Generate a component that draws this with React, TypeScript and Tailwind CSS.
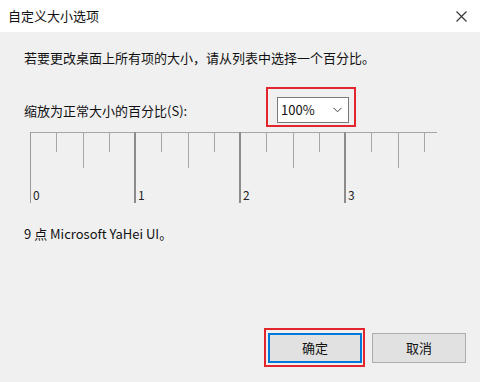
import React from "react";

const FONT = '"Noto Sans CJK SC", "Noto Sans", sans-serif';

function Ruler() {
  const minor: number[] = [];
  for (let i = 0; i < 16; i++) {
    if (i % 4 === 0) continue;
    minor.push(i);
  }
  const ox = 6; // x=30 in page coords with container at 24
  const step = 105 / 4;
  return (
    <svg width="432" height="80" className="block" style={{ fontFamily: FONT }}>
      <line x1={ox} y1={5.5} x2={413} y2={5.5} stroke="#a6a6a6" strokeWidth={1} />
      <line x1={ox + 0.5} y1={5} x2={ox + 0.5} y2={76} stroke="#9a9a9a" strokeWidth={1} />
      {[1, 2, 3].map((m) => (
        <line key={m} x1={ox + m * 105} y1={5} x2={ox + m * 105} y2={76} stroke="#8c8c8c" strokeWidth={2} />
      ))}
      {minor.map((i) => {
        const x = Math.round(ox + i * step) + 0.5;
        const len = i % 2 === 0 ? 41 : 25;
        return <line key={i} x1={x} y1={5} x2={x} y2={len} stroke="#a6a6a6" strokeWidth={1} />;
      })}
      {[0, 1, 2, 3].map((m) => (
        <text key={m} x={ox + 3 + m * 105} y={73} fontSize={12} fill="#222">
          {m}
        </text>
      ))}
    </svg>
  );
}

export default function App() {
  return (
    <div
      className="w-[480px] h-[382px] bg-[#f0f0f0] flex flex-col text-black overflow-hidden"
      style={{ fontFamily: FONT }}
    >
      <div className="h-[32px] bg-white flex items-center justify-between pl-[8px] pr-[13px] shrink-0">
        <span className="text-[13px] leading-[18px] text-[#111]">自定义大小选项</span>
        <svg width="11" height="11" viewBox="0 0 11 11">
          <path d="M0.5 0.5 L10.5 10.5 M10.5 0.5 L0.5 10.5" stroke="#333" strokeWidth="1.1" fill="none" />
        </svg>
      </div>

      <div className="flex flex-col px-[24px] flex-1">
        <p className="mt-[17px] text-[13px] leading-[18px] text-[#111]">
          若要更改桌面上所有项的大小，请从列表中选择一个百分比。
        </p>

        <div className="flex items-end mt-[20px] h-[40px]">
          <span className="w-[242px] text-[13px] leading-[18px] pb-[7px] text-[#111]">
            缩放为正常大小的百分比(S):
          </span>
          <div className="relative ml-[11px] mb-[4px]">
            <div className="w-[72px] h-[26px] bg-white border border-[#7a7a7a] flex items-center justify-between pl-[3px] pr-[6px]">
              <span className="text-[13px] leading-[18px] text-[#111]">100%</span>
              <svg width="9" height="6" viewBox="0 0 9 6">
                <path d="M0.5 0.8 L4.5 4.8 L8.5 0.8" stroke="#444" strokeWidth="1" fill="none" />
              </svg>
            </div>
            <div className="absolute left-[-11px] top-[-10px] w-[90px] h-[40px] border-2 border-[#e3262b] pointer-events-none" />
          </div>
        </div>

        <Ruler />

        <p className="mt-[18px] text-[13px] leading-[18px] text-[#111]">9 点 Microsoft YaHei UI。</p>

        <div className="mt-auto flex justify-end gap-[10px] pb-[19px] pr-[-10px] mr-[-10px]">
          <div className="relative">
            <button className="w-[94px] h-[30px] bg-[#e1e1e1] border-2 border-[#0078d7] text-[13px] text-[#111] flex items-center justify-center">
              确定
            </button>
            <div className="absolute left-[-4px] top-[-5px] w-[101px] h-[39px] border-2 border-[#e3262b] pointer-events-none" />
          </div>
          <button className="w-[94px] h-[30px] bg-[#e1e1e1] border border-[#adadad] text-[13px] text-[#111] flex items-center justify-center">
            取消
          </button>
        </div>
      </div>
    </div>
  );
}
